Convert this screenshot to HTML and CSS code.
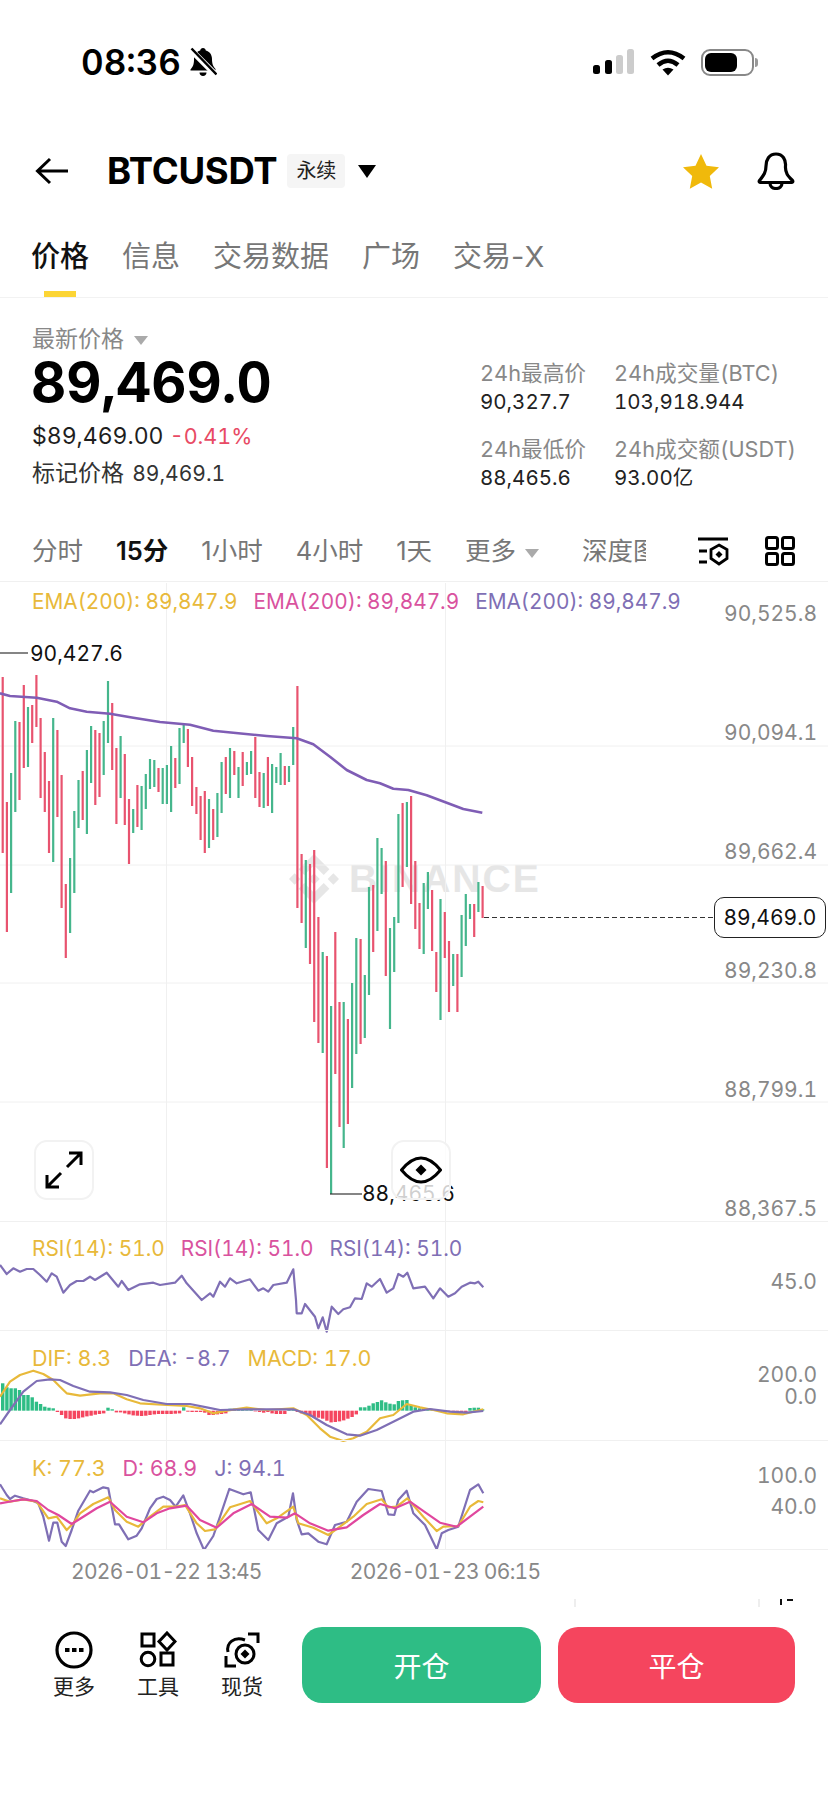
FILE: index.html
```html
<!DOCTYPE html>
<html lang="zh">
<head>
    <meta charset="UTF-8">
    <meta name="viewport" content="width=device-width, initial-scale=1.0">
    <title>BTCUSDT 永续</title>
    <link rel="stylesheet" href="styles.css">
</head>
<body>
    <div class="status-bar">
        <div class="clock">
            <span class="clock-time">08:36</span>
            <svg class="icon-mute" width="28" height="30" viewBox="0 0 28 30">
                <path d="M14 1c1.6 0 2.6 1 2.8 2.4 4 1 6.2 4.400 6.200 8.600 0 5 1.200 7.400 3.500 10v1.500H1.500V22.500c2.300-2.600 3.500-5 3.500-10 0-4.300 2.200-7.700 6.200-8.900C11.400 2 12.400 1 14 1zM10.500 25.500h7c0 2-1.500 3.500-3.500 3.500s-3.500-1.500-3.500-3.500z" fill="#000"/>
                <path d="M1 2l26 26" stroke="#fff" stroke-width="6"/>
                <path d="M2.500 1.500l25 26" stroke="#000" stroke-width="2.500"/>
            </svg>
        </div>
        <div class="status-icons">
            <svg width="42" height="26" viewBox="0 0 42 26">
                <rect x="0" y="16" width="7" height="9" rx="2.500" fill="#000"/>
                <rect x="12" y="11" width="7" height="14" rx="2.500" fill="#000"/>
                <rect x="23" y="6" width="7" height="19" rx="2.500" fill="#ccc"/>
                <rect x="34" y="0" width="7" height="25" rx="2.500" fill="#ccc"/>
            </svg>
            <svg width="36" height="27" viewBox="0 0 36 27">
                <path d="M2 9.500Q18-3 34 9.500" fill="none" stroke="#000" stroke-width="4.500"/>
                <path d="M8 16Q18 7.500 28 16" fill="none" stroke="#000" stroke-width="4.500"/>
                <path d="M12.500 20.500Q18 17 23.500 20.500L18 26.500z" fill="#000"/>
            </svg>
            <div class="battery"><div class="battery-level"></div></div>
        </div>
    </div>

    <div class="top-bar">
        <svg class="back" width="34" height="28" viewBox="0 0 34 28">
            <path d="M33 14H3M15 2L2.500 14 15 26" fill="none" stroke="#000" stroke-width="3"/>
        </svg>
        <span class="symbol">BTCUSDT</span>
        <span class="badge">永续</span>
        <span class="caret-dark"></span>
        <svg class="star" width="38" height="36" viewBox="0 0 38 36">
            <path d="M19 1l5.500 11.700 12.500 1.600-9.200 8.800 2.400 12.700L19 29.500 7.800 35.800l2.400-12.700L1 14.300l12.500-1.600z" fill="#f0b90b"/>
        </svg>
        <svg class="bell" width="38" height="38" viewBox="0 0 38 38">
            <path d="M19 2c-7 0-10 6-10 12 0 7-3 10-6.500 14.500-.8 1 0 2 1 2h31c1 0 1.800-1 1-2C31 24 28 21 28.500 14 29 8 26 2 19 2z" fill="none" stroke="#000" stroke-width="3.200" stroke-linejoin="round"/>
            <path d="M13 31c0 3.500 2.500 5.500 6 5.500s6-2 6-5.500" fill="none" stroke="#000" stroke-width="3.200"/>
        </svg>
    </div>

    <nav class="tabs">
        <a class="tab active">价格</a>
        <a class="tab">信息</a>
        <a class="tab">交易数据</a>
        <a class="tab">广场</a>
        <a class="tab">交易-X</a>
    </nav>

    <section class="summary">
        <div class="summary-left">
            <div class="price-label">最新价格 <span class="caret-grey"></span></div>
            <div class="price">89,469.0</div>
            <div class="price-sub">$89,469.00 <span class="down">-0.41%</span></div>
            <div class="mark-price">标记价格 <span>89,469.1</span></div>
        </div>
        <div class="stats">
            <div class="stat"><div class="stat-name">24h最高价</div><div class="stat-value">90,327.7</div></div>
            <div class="stat"><div class="stat-name">24h成交量(BTC)</div><div class="stat-value">103,918.944</div></div>
            <div class="stat"><div class="stat-name">24h最低价</div><div class="stat-value">88,465.6</div></div>
            <div class="stat"><div class="stat-name">24h成交额(USDT)</div><div class="stat-value">93.00亿</div></div>
        </div>
    </section>

    <div class="intervals">
        <span>分时</span>
        <span class="current">15分</span>
        <span>1小时</span>
        <span>4小时</span>
        <span>1天</span>
        <span class="more">更多<i class="caret-grey"></i></span>
        <span class="depth">深度图</span>
        <div class="interval-icons">
            <svg width="32" height="30" viewBox="0 0 32 30">
                <path d="M1 3h30M2 15h8M2 26h8" fill="none" stroke="#000" stroke-width="3"/>
                <path d="M22 9l8 4.500v9L22 28l-8-5.500v-9z" fill="none" stroke="#000" stroke-width="2.800"/>
                <path d="M22 15l3.500 3.500L22 22l-3.500-3.500z" fill="#000"/>
            </svg>
            <svg width="30" height="30" viewBox="0 0 30 30">
                <rect x="1.500" y="1.500" width="11" height="11" rx="2" fill="none" stroke="#000" stroke-width="3"/>
                <rect x="17.500" y="1.500" width="11" height="11" rx="2" fill="none" stroke="#000" stroke-width="3"/>
                <rect x="1.500" y="17.500" width="11" height="11" rx="2" fill="none" stroke="#000" stroke-width="3"/>
                <rect x="17.500" y="17.500" width="11" height="11" rx="2" fill="none" stroke="#000" stroke-width="3"/>
            </svg>
        </div>
    </div>

    <section class="chart">
        <div class="watermark">
            <svg width="50" height="50" viewBox="0 0 126.610 126.610">
                <path d="M38.730 53.200l24.590-24.580 24.600 24.600 14.300-14.310L63.320 0 24.420 38.900zM0 63.310L14.300 49l14.310 14.310L14.300 77.610zM38.730 73.410l24.590 24.590 24.600-24.600 14.310 14.290-38.900 38.910-38.910-38.880zM98 63.310l14.300-14.310 14.310 14.300-14.310 14.300zM77.830 63.300L63.320 48.780 48.810 63.280l14.510 14.500z" fill="#e6e6e6"/>
            </svg>
            <span>BINANCE</span>
        </div>
        <svg id="plot" class="plot" viewBox="0 582 828 968"></svg>

        <div class="pane pane-main">
            <div class="legend">
                <span class="yellow">EMA(200): 89,847.9</span>
                <span class="pink">EMA(200): 89,847.9</span>
                <span class="purple">EMA(200): 89,847.9</span>
            </div>
            <div class="axis axis-main">
                <span>90,525.8</span>
                <span>90,094.1</span>
                <span>89,662.4</span>
                <span>89,230.8</span>
                <span>88,799.1</span>
                <span>88,367.5</span>
            </div>
            <span class="extreme extreme-high">90,427.6</span>
            <span class="extreme extreme-low">88,465.6</span>
            <div class="last-price">89,469.0</div>
            <button class="chart-btn btn-expand">
                <svg width="38" height="38" viewBox="0 0 38 38">
                    <path d="M22 16L36 2M24 2h12v12M16 22L2 36M2 24v12h12" fill="none" stroke="#000" stroke-width="3"/>
                </svg>
            </button>
            <button class="chart-btn btn-eye">
                <svg width="42" height="28" viewBox="0 0 42 28">
                    <path d="M1.500 14C8 6 14 2 21 2s13 4 19.500 12C34 22 28 26 21 26S8 22 1.500 14z" fill="none" stroke="#000" stroke-width="3"/>
                    <path d="M21 8.500l5.500 5.500-5.500 5.500-5.500-5.500z" fill="#000"/>
                </svg>
            </button>
        </div>

        <div class="pane pane-rsi">
            <div class="legend">
                <span class="yellow">RSI(14): 51.0</span>
                <span class="pink">RSI(14): 51.0</span>
                <span class="purple">RSI(14): 51.0</span>
            </div>
            <div class="axis axis-rsi"><span>45.0</span></div>
        </div>

        <div class="pane pane-macd">
            <div class="legend">
                <span class="yellow">DIF: 8.3</span>
                <span class="purple">DEA: -8.7</span>
                <span class="yellow">MACD: 17.0</span>
            </div>
            <div class="axis axis-macd"><span>200.0</span><span>0.0</span></div>
        </div>

        <div class="pane pane-kdj">
            <div class="legend">
                <span class="yellow">K: 77.3</span>
                <span class="pink">D: 68.9</span>
                <span class="purple">J: 94.1</span>
            </div>
            <div class="axis axis-kdj"><span>100.0</span><span>40.0</span></div>
        </div>
    </section>

    <div class="time-axis">
        <span>2026-01-22 13:45</span>
        <span>2026-01-23 06:15</span>
    </div>

    <div class="actions">
        <svg class="remnants" width="828" height="10" viewBox="0 0 828 10">
            <path d="M575 0v8M759 0v8" stroke="#ddd" stroke-width="1"/>
            <path d="M781 0v6M787 1h6" stroke="#111" stroke-width="2"/>
        </svg>
        <div class="tool">
            <svg width="38" height="38" viewBox="0 0 38 38">
                <circle cx="19" cy="19" r="17" fill="none" stroke="#000" stroke-width="3.200"/>
                <rect x="10" y="17" width="4.500" height="4" fill="#000"/>
                <rect x="17" y="17" width="4.500" height="4" fill="#000"/>
                <rect x="24" y="17" width="4.500" height="4" fill="#000"/>
            </svg>
            <span>更多</span>
        </div>
        <div class="tool">
            <svg width="38" height="38" viewBox="0 0 38 38">
                <rect x="3" y="3" width="12" height="12" fill="none" stroke="#000" stroke-width="3"/>
                <path d="M28 2l8 8.500-8 8.500-8-8.500z" fill="none" stroke="#000" stroke-width="3"/>
                <circle cx="9" cy="28" r="6.800" fill="none" stroke="#000" stroke-width="3"/>
                <rect x="22" y="22" width="12" height="12" fill="none" stroke="#000" stroke-width="3"/>
            </svg>
            <span>工具</span>
        </div>
        <div class="tool">
            <svg width="38" height="38" viewBox="0 0 38 38">
                <path d="M25 3h10v9M3 25v10h10" fill="none" stroke="#000" stroke-width="3"/>
                <path d="M5 21C3 12 11 5 22 9" fill="none" stroke="#000" stroke-width="3"/>
                <circle cx="22" cy="23" r="9" fill="none" stroke="#000" stroke-width="3"/>
                <path d="M22 18.500l4.500 4.500-4.500 4.500-4.500-4.500z" fill="#000"/>
            </svg>
            <span>现货</span>
        </div>
        <button class="trade open">开仓</button>
        <button class="trade close">平仓</button>
    </div>

    <script src="chart.js"></script>
</body>
</html>
```

FILE: styles.css
```css
* {
    box-sizing: border-box;
}
body {
    margin: 0;
    width: 828px;
    background: #ffffff;
    color: #000;
    font-family: Inter, 'Noto Sans CJK SC', sans-serif;
    font-variant-numeric: tabular-nums;
}

/* status bar */
.status-bar {
    height: 124px;
    display: flex;
    justify-content: space-between;
    align-items: center;
    padding: 0 74px 0 81px;
}
.clock {
    display: flex;
    align-items: center;
    gap: 8px;
}
.clock-time {
    font-size: 35px;
    font-weight: 600;
}
.status-icons {
    display: flex;
    align-items: center;
    gap: 15px;
}
.battery {
    position: relative;
    width: 53px;
    height: 27px;
    border: 2px solid #888;
    border-radius: 9px;
    padding: 2px;
}
.battery-level {
    width: 32px;
    height: 19px;
    background: #000;
    border-radius: 6px;
}
.battery::after {
    content: "";
    position: absolute;
    right: -6px;
    top: 7px;
    width: 3px;
    height: 9px;
    background: #999;
    border-radius: 0 3px 3px 0;
}

/* symbol row */
.top-bar {
    height: 94px;
    display: flex;
    align-items: center;
    padding: 0 33px 0 35px;
}
.back {
    margin-right: 38px;
}
.symbol {
    font-size: 36.500px;
    font-weight: 700;
    letter-spacing: -0.3px;
}
.badge {
    margin-left: 10px;
    width: 58px;
    height: 34px;
    line-height: 34px;
    text-align: center;
    background: #f5f5f5;
    border-radius: 4px;
    font-size: 20px;
    color: #222;
}
.caret-dark {
    margin-left: 13px;
    border-left: 9px solid transparent;
    border-right: 9px solid transparent;
    border-top: 13px solid #000;
}
.star {
    margin-left: auto;
}
.bell {
    margin-left: 37px;
}

/* tabs */
.tabs {
    height: 80px;
    display: flex;
    gap: 33px;
    padding: 22px 31px 0;
    border-bottom: 1px solid #f2f2f2;
    font-variant-numeric: normal;
}
.tab {
    position: relative;
    height: 34px;
    line-height: 34px;
    font-size: 29px;
    color: #777;
}
.tab.active {
    color: #111;
    font-weight: 500;
}
.tab.active::after {
    content: "";
    position: absolute;
    left: 13px;
    bottom: -23px;
    width: 32px;
    height: 6px;
    background: #fcd535;
}

/* price summary */
.summary {
    height: 222px;
    display: flex;
    padding-left: 32px;
}
.summary-left {
    width: 448px;
    padding-top: 26px;
}
.price-label {
    height: 30px;
    line-height: 30px;
    font-size: 23px;
    color: #888;
}
.caret-grey {
    display: inline-block;
    margin-left: 4px;
    border-left: 7px solid transparent;
    border-right: 7px solid transparent;
    border-top: 9px solid #aaa;
    vertical-align: middle;
}
.price {
    height: 56px;
    line-height: 56px;
    margin-left: -1px;
    font-size: 54.500px;
    font-weight: 700;
}
.price-sub {
    margin-top: 12px;
    line-height: 28px;
    font-size: 23px;
    color: #1e1e1e;
}
.down {
    font-size: 21.500px;
    color: #e84a64;
}
.mark-price {
    margin-top: 9px;
    line-height: 28px;
    font-size: 23px;
    color: #333;
}
.mark-price span {
    margin-left: 2px;
    font-size: 21px;
}
.stats {
    display: grid;
    grid-template-columns: 134px auto;
    grid-auto-rows: 57px;
    row-gap: 19px;
    padding-top: 61px;
}
.stat-name {
    line-height: 28px;
    font-size: 21.700px;
    color: #888;
    white-space: nowrap;
}
.stat-value {
    margin-top: 1px;
    line-height: 28px;
    font-size: 20.500px;
    color: #222;
}

/* interval row */
.intervals {
    height: 62px;
    display: flex;
    align-items: center;
    gap: 33px;
    padding: 0 33px 0 32px;
    border-bottom: 1px solid #f0f0f0;
    font-size: 25.500px;
    font-variant-numeric: normal;
    color: #777;
}
.intervals span {
    position: relative;
    top: -2px;
}
.intervals .current {
    color: #111;
    font-weight: 600;
}
.more i {
    margin-left: 9px;
}
.depth {
    width: 64px;
    margin-left: 10px;
    overflow: hidden;
    white-space: nowrap;
}
.interval-icons {
    display: flex;
    gap: 36px;
    margin-left: auto;
}

/* chart */
.chart {
    position: relative;
    height: 968px;
    font-size: 21px;
}
.plot {
    position: absolute;
    left: 0;
    top: 0;
    width: 828px;
    height: 968px;
}
.watermark {
    position: absolute;
    left: 289px;
    top: 272px;
    display: flex;
    align-items: center;
    gap: 10px;
    color: #e6e6e6;
    font-family: 'Liberation Sans', sans-serif;
    font-size: 39px;
    font-weight: 700;
    letter-spacing: 2px;
}
.pane {
    position: relative;
    border-bottom: 1px solid #f0f0f0;
    padding: 15px 0 0 32px;
}
.pane-main {
    height: 640px;
    padding-top: 8px;
}
.pane-rsi {
    height: 109px;
}
.pane-macd {
    height: 110px;
}
.pane-kdj {
    height: 109px;
}
.legend {
    display: flex;
    gap: 17px;
    line-height: 24px;
    font-size: 21.500px;
}
.pane-main .legend,
.pane-rsi .legend {
    gap: 16px;
    font-size: 20.800px;
}
.yellow {
    color: #e8b93a;
}
.pink {
    color: #d9529e;
}
.purple {
    color: #7f6fb5;
}
.axis {
    position: absolute;
    right: 11px;
    display: flex;
    flex-direction: column;
    align-items: flex-end;
    line-height: 24px;
    color: #888;
}
.axis-main {
    top: 20px;
    gap: 95px;
}
.axis-rsi {
    top: 48px;
}
.axis-macd {
    top: 33px;
    gap: 0;
    line-height: 22px;
}
.axis-kdj {
    top: 23px;
    gap: 7px;
}
.extreme {
    position: absolute;
    line-height: 24px;
    color: #111;
}
.extreme-high {
    left: 30px;
    top: 60px;
}
.extreme-low {
    left: 362px;
    top: 600px;
}
.last-price {
    position: absolute;
    left: 714px;
    top: 315px;
    width: 112px;
    height: 41px;
    display: flex;
    align-items: center;
    justify-content: center;
    background: #ffffff;
    border: 1.500px solid #222;
    border-radius: 10px;
    color: #111;
}
.chart-btn {
    position: absolute;
    top: 558px;
    width: 60px;
    height: 60px;
    padding: 0;
    display: flex;
    align-items: center;
    justify-content: center;
    background: rgba(255, 255, 255, 0.8);
    border: 2px solid #f2f2f2;
    border-radius: 13px;
}
.btn-expand {
    left: 34px;
}
.btn-eye {
    left: 391px;
}

/* time axis */
.time-axis {
    height: 42px;
    display: flex;
    align-items: center;
    gap: 88px;
    padding-left: 71px;
    font-size: 21px;
    letter-spacing: -0.7px;
    color: #888;
}

/* bottom actions */
.actions {
    position: relative;
    display: flex;
    align-items: flex-start;
    margin-top: 35px;
    padding-left: 53px;
}
.remnants {
    position: absolute;
    left: 0;
    top: -28px;
}
.tool {
    width: 84px;
    display: flex;
    flex-direction: column;
    align-items: flex-start;
    gap: 4px;
    padding-top: 4px;
    font-size: 21px;
    line-height: 28px;
    color: #222;
}
.tool svg {
    margin-left: 2px;
}
.trade {
    height: 76px;
    border: 0;
    border-radius: 20px;
    color: #ffffff;
    font-family: inherit;
    font-size: 28px;
}
.open {
    width: 239px;
    margin-left: -3px;
    background: #2ebd85;
}
.close {
    width: 237px;
    margin-left: 17px;
    background: #f5455e;
}
```

FILE: chart.js
```js
const SVG_NS = "http://www.w3.org/2000/svg";
const plot = document.getElementById("plot");

const GREEN = "#45b68c";
const RED = "#e8536f";
const FIRST_X = 2.7;
const STEP = 4.21;

function add(tag, attrs) {
    const el = document.createElementNS(SVG_NS, tag);
    for (const name in attrs) el.setAttribute(name, attrs[name]);
    plot.appendChild(el);
}

// points were read off the 3x crops, so x/3 and originY + y/3
function curve(raw, originY, color, width) {
    const points = [];
    for (let i = 0; i < raw.length; i += 2) {
        points.push((raw[i] / 3).toFixed(1) + "," + (originY + raw[i + 1] / 3).toFixed(1));
    }
    add("polyline", {
        points: points.join(" "),
        fill: "none",
        stroke: color,
        "stroke-width": width,
        "stroke-linejoin": "round"
    });
}

function straight(d, color, width, dash) {
    const attrs = { d: d, fill: "none", stroke: color, "stroke-width": width };
    if (dash) attrs["stroke-dasharray"] = dash;
    add("path", attrs);
}

// grid
[746, 865, 983, 1102].forEach(y => straight("M0 " + y + "H828", "#f0f0f0", 1));
[166.5, 445.5].forEach(x => straight("M" + x + " 583V1550", "#f0f0f0", 1));

// top, bottom, 1 = green
const candles = [
    [677,853,0],[802,932,0],[773,893,1],[721,812,1],[722,800,0],[685,768,0],[707,767,1],[705,743,0],
    [675,727,0],[718,798,0],[752,812,0],[781,853,0],[718,862,1],[730,817,0],[775,908,0],[884,958,0],
    [858,933,1],[811,893,1],[780,828,1],[771,820,0],[750,834,1],[726,783,1],[730,805,0],[733,797,0],
    [721,775,1],[681,743,1],[703,770,0],[748,824,0],[736,798,1],[754,825,0],[799,864,0],[809,833,1],
    [785,827,0],[786,830,1],[774,809,1],[759,789,1],[760,787,1],[768,792,0],[768,804,1],[765,804,1],
    [746,812,1],[758,788,0],[728,784,1],[724,743,1],[729,767,0],[757,806,0],[787,814,0],[796,840,0],
    [791,853,0],[799,848,1],[809,840,0],[793,837,1],[762,813,1],[757,794,0],[748,798,1],[751,775,0],
    [767,798,1],[752,786,0],[762,775,1],[751,774,1],[737,798,0],[772,807,0],[773,808,1],[757,806,0],
    [764,813,1],[767,783,1],[753,785,1],[766,785,0],[766,782,1],[727,765,1],[686,908,0],[854,923,0],
    [860,948,1],[864,964,0],[850,1022,0],[917,1043,0],[952,1053,1],[956,1168,0],[1006,1194,1],[932,1074,0],
    [1002,1127,0],[1002,1148,1],[1019,1124,0],[983,1088,1],[938,1054,1],[939,1044,0],[975,1038,1],[887,995,1],
    [885,952,0],[838,931,1],[848,894,1],[861,976,0],[928,1029,1],[917,972,1],[814,923,1],[803,887,0],
    [802,867,1],[796,904,0],[861,929,0],[903,949,0],[883,954,1],[872,909,1],[890,951,0],[952,992,0],
    [899,1020,1],[912,958,0],[941,1012,0],[954,986,1],[954,1012,0],[915,977,1],[894,946,1],[904,919,1],
    [904,937,0],[882,912,1],[886,918,0]
];

candles.forEach((c, i) => {
    const x = (FIRST_X + i * STEP).toFixed(1);
    straight("M" + x + " " + c[0] + "V" + c[1], c[2] ? GREEN : RED, 2.2);
});

// EMA
curve([0,250,30,258,110,263,170,275,210,295,260,305,330,311,400,323,480,336,570,344,640,362,700,368,
    800,378,890,385,940,403,990,440,1040,480,1100,510,1140,520,1180,536,1225,540,1280,556,1340,578,
    1390,597,1447,608], 610, "#7f5db5", 2.6);

// high / low / last price markers
straight("M0 653H28", "#333", 1.2);
straight("M330 1194H362", "#333", 1.2);
straight("M484 917.500H714", "#333", 1, "5 3");

// RSI
curve([0,495,20,522,40,505,60,515,80,507,100,507,120,525,140,545,155,520,170,530,190,578,210,555,
    230,543,250,543,270,530,285,540,320,518,355,560,365,543,385,570,420,553,460,548,480,555,525,548,
    545,527,560,550,605,600,630,580,640,590,660,545,675,560,690,535,710,550,750,538,775,572,790,565,
    805,575,820,555,860,548,880,508,888,600,890,640,905,640,915,612,945,650,955,685,968,652,980,695,
    995,620,1015,642,1030,628,1050,622,1065,595,1085,597,1100,550,1115,560,1140,537,1160,578,1180,565,
    1195,522,1210,530,1222,518,1240,565,1275,560,1300,595,1320,565,1345,590,1365,580,1385,560,1410,548,
    1425,550,1435,545,1450,562], 1100, "#7f6fb5", 2.2);

// MACD histogram, zero line at 332 in crop units
const histogram = [
    250,262,265,265,270,285,285,292,305,312,320,323,325,336,345,355,357,357,355,352,349,347,344,342,340,
    323,328,337,337,340,343,346,347,348,347,345,343,342,342,342,342,341,340,322,335,336,336,336,338,345,
    345,343,342,340,326,326,327,327,328,329,334,336,338,336,340,342,342,342,326,324,336,340,345,349,351,
    353,356,362,367,366,364,361,356,351,343,322,322,317,310,306,301,307,311,313,303,301,300,315,322,325,
    327,329,330,330,331,335,334,337,334,337,336,324,323,323,328
];
histogram.forEach((v, i) => {
    const x = FIRST_X + i * STEP - 1.7;
    const top = 1300 + Math.min(v, 332) / 3;
    const height = Math.abs(v - 332) / 3;
    add("rect", {
        x: x.toFixed(1),
        y: top.toFixed(1),
        width: 3.4,
        height: height.toFixed(1),
        fill: v < 332 ? "#2ebd85" : "#f5465f"
    });
});

curve([0,290,30,245,60,225,100,212,130,222,160,240,180,260,200,280,240,287,300,280,340,280,380,298,
    420,310,500,315,560,318,600,325,640,340,680,332,740,323,800,330,880,325,920,345,960,385,990,410,
    1030,423,1060,415,1100,395,1140,355,1180,345,1220,312,1260,322,1300,330,1340,340,1390,343,1450,328],
    1300, "#e8b93a", 2.2);
curve([0,373,30,330,70,275,110,243,150,238,180,240,220,258,270,275,330,277,380,285,430,300,500,312,
    570,312,620,322,660,330,740,328,880,328,930,345,980,375,1040,403,1080,407,1130,390,1180,365,1240,335,
    1290,327,1350,335,1400,338,1450,333], 1300, "#7f6fb5", 2.2);

// KDJ
curve([0,553,20,585,30,597,45,587,70,595,100,603,115,610,130,650,147,722,160,668,172,668,185,725,197,738,
    215,690,235,632,270,572,280,577,310,562,325,565,345,673,357,673,385,718,410,707,425,685,450,625,470,597,
    490,590,510,600,527,620,550,586,570,640,590,700,612,750,640,708,660,650,688,567,730,583,752,577,775,690,
    805,720,830,670,865,650,879,580,890,660,905,703,925,700,955,725,980,733,1005,675,1040,665,1070,605,
    1105,567,1145,573,1165,643,1183,645,1195,600,1220,572,1240,640,1275,675,1310,748,1325,700,1345,690,
    1375,680,1410,570,1435,553,1450,580], 1300, "#7f6fb5", 2.2);
curve([0,595,30,605,70,598,110,605,145,655,170,650,200,690,220,670,240,640,280,612,325,592,345,630,380,665,
    415,680,450,650,490,620,530,620,555,615,590,670,615,693,645,688,690,622,750,603,800,670,830,655,880,620,
    895,670,940,683,985,705,1020,680,1060,650,1100,612,1145,598,1165,622,1190,620,1222,595,1270,650,1310,693,
    1330,680,1375,678,1410,620,1435,603,1450,607], 1300, "#e8b93a", 2.2);
curve([0,610,40,603,70,598,110,603,145,630,175,645,215,672,250,650,290,625,330,605,380,650,430,667,470,640,
    510,625,560,617,600,660,650,683,700,640,755,612,810,650,860,653,885,640,930,670,985,692,1040,682,1090,645,
    1140,612,1185,625,1230,605,1280,640,1320,668,1370,680,1410,650,1450,620], 1300, "#e0479e", 2.2);
```
